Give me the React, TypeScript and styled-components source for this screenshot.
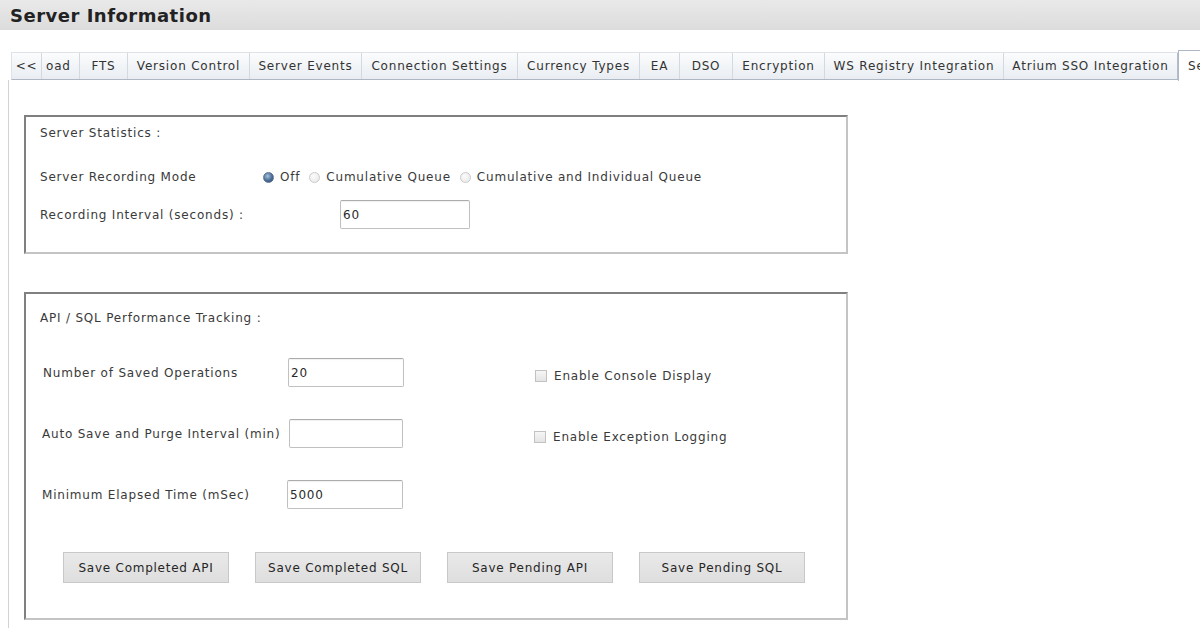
import styled, { createGlobalStyle } from "styled-components";

const GlobalStyle = createGlobalStyle`
  html, body {
    margin: 0;
    padding: 0;
    background: #fff;
    overflow: hidden;
  }
  body {
    font-family: "DejaVu Sans", Verdana, sans-serif;
    color: #3a3a3a;
  }
`;

const Page = styled.div`
  width: 1200px;
  height: 628px;
  overflow: hidden;
`;

const Header = styled.div`
  height: 30px;
  display: flex;
  align-items: center;
  padding-left: 10px;
  background: linear-gradient(#e9e9e9, #dcdcdc);

  h1 {
    margin: 0;
    font: bold 18px "DejaVu Sans", sans-serif;
    letter-spacing: 0.5px;
    color: #222;
  }
`;

const TabArea = styled.div`
  margin: 20px 0 0 8px;
  width: 1400px;
`;

const TabRow = styled.div`
  display: flex;
  align-items: flex-end;
  height: 30px;
  padding-left: 3px;
`;

const TabStrip = styled.div`
  display: flex;
  height: 28px;
  box-sizing: border-box;
  border: 1px solid #dfe3e8;
  border-bottom-color: #aeb8c5;
  border-right: none;
  background: linear-gradient(#fbfcfd, #e9edf2);
`;

const Tab = styled.div<{ $w: number; $left?: boolean }>`
  width: ${(p) => p.$w}px;
  box-sizing: border-box;
  display: flex;
  align-items: center;
  justify-content: ${(p) => (p.$left ? "flex-start" : "center")};
  padding-left: ${(p) => (p.$left ? "4px" : "0")};
  border-right: 1px solid #d3d9e1;
  font-size: 12px;
  letter-spacing: 0.8px;
  color: #333;
  white-space: nowrap;
  overflow: hidden;

  &:last-child {
    border-right-color: #b4bdc9;
  }
`;

const ActiveTab = styled.div`
  height: 31px;
  box-sizing: border-box;
  margin-bottom: -1px;
  padding: 0 9px;
  display: flex;
  align-items: center;
  background: #fff;
  border: 1px solid #aeb8c5;
  border-bottom: none;
  font-size: 12px;
  letter-spacing: 0.8px;
  color: #333;
  white-space: nowrap;
`;

const TabPanel = styled.div`
  border-left: 1px solid #d2d2d2;
  padding: 35px 0 20px 15px;
  height: 600px;
`;

const GroupBox = styled.div<{ $pt: number; $pb: number; $mt?: number }>`
  width: 824px;
  box-sizing: border-box;
  margin-top: ${(p) => p.$mt ?? 0}px;
  padding: ${(p) => p.$pt}px 14px ${(p) => p.$pb}px;
  border: 2px solid;
  border-color: #808080 #c4c4c4 #c4c4c4 #808080;
  font-size: 12px;
  letter-spacing: 0.8px;
`;

const GroupTitle = styled.div`
  line-height: 16px;
  white-space: nowrap;
`;

const Row = styled.div<{ $mt: number; $h: number; $indent?: number }>`
  display: flex;
  align-items: center;
  margin-top: ${(p) => p.$mt}px;
  height: ${(p) => p.$h}px;
  padding-left: ${(p) => p.$indent ?? 0}px;
  white-space: nowrap;
`;

const Label = styled.div<{ $w: number }>`
  width: ${(p) => p.$w}px;
  flex: none;
  white-space: nowrap;
`;

const RadioOption = styled.label`
  display: flex;
  align-items: center;
  gap: 6px;
  margin-right: 9px;
`;

const RadioDot = styled.span<{ $on?: boolean }>`
  width: 11px;
  height: 11px;
  border-radius: 50%;
  box-sizing: border-box;
  border: 1px solid ${(p) => (p.$on ? "#5f7590" : "#cbcbcb")};
  background: ${(p) =>
    p.$on
      ? "radial-gradient(circle at 40% 35%, #a8c2de 0%, #4a6d96 55%, #2b4466 100%)"
      : "radial-gradient(circle at 40% 35%, #fbfbfb 0%, #e6e6e6 100%)"};
`;

const TextInput = styled.input<{ $w: number }>`
  width: ${(p) => p.$w}px;
  height: 29px;
  box-sizing: border-box;
  margin: 0;
  padding: 0 2px;
  border: 1px solid #c0c0c0;
  border-top-color: #acacac;
  border-radius: 2px;
  box-shadow: inset 0 1px 1px rgba(0, 0, 0, 0.06);
  font: 12px "DejaVu Sans", Verdana, sans-serif;
  letter-spacing: 0.8px;
  color: #2a2a2a;
  background: #fff;
  outline: none;
`;

const CheckOption = styled.label`
  display: flex;
  align-items: center;
  gap: 7px;
  margin-left: 131px;
  padding-top: 6px;
`;

const CheckBox = styled.span`
  width: 12px;
  height: 12px;
  box-sizing: border-box;
  border: 1px solid #c2c2c2;
  background: linear-gradient(#f6f6f6, #e4e4e4);
`;

const ButtonRow = styled.div`
  display: flex;
  gap: 26px;
  margin-top: 43px;
  padding-left: 23px;
`;

const Button = styled.button`
  width: 166px;
  height: 31px;
  margin: 0;
  padding: 0;
  border: 1px solid #c8c8c8;
  background: linear-gradient(#e9e9e9, #dedede);
  font: 12px "DejaVu Sans", Verdana, sans-serif;
  letter-spacing: 0.75px;
  color: #262626;
`;

const tabs: [string, number][] = [
  ["<<", 30],
  ["oad", 38],
  ["FTS", 48],
  ["Version Control", 122],
  ["Server Events", 112],
  ["Connection Settings", 156],
  ["Currency Types", 122],
  ["EA", 40],
  ["DSO", 53],
  ["Encryption", 92],
  ["WS Registry Integration", 179],
  ["Atrium SSO Integration", 174],
];

export default function App() {
  return (
    <Page>
      <GlobalStyle />
      <Header>
        <h1>Server Information</h1>
      </Header>
      <TabArea>
        <TabRow>
          <TabStrip>
            {tabs.map(([name, w]) => (
              <Tab key={name} $w={w} $left={name === "oad"}>
                {name}
              </Tab>
            ))}
          </TabStrip>
          <ActiveTab>Server Statistics</ActiveTab>
        </TabRow>
        <TabPanel>
          <GroupBox $pt={8} $pb={23}>
            <GroupTitle>Server Statistics :</GroupTitle>
            <Row $mt={26} $h={20}>
              <Label $w={223}>Server Recording Mode</Label>
              <RadioOption>
                <RadioDot $on />
                Off
              </RadioOption>
              <RadioOption>
                <RadioDot />
                Cumulative Queue
              </RadioOption>
              <RadioOption>
                <RadioDot />
                Cumulative and Individual Queue
              </RadioOption>
            </Row>
            <Row $mt={13} $h={29}>
              <Label $w={300}>Recording Interval (seconds) :</Label>
              <TextInput $w={130} defaultValue="60" />
            </Row>
          </GroupBox>

          <GroupBox $pt={16} $pb={35} $mt={38}>
            <GroupTitle>API / SQL Performance Tracking :</GroupTitle>
            <Row $mt={32} $h={29} $indent={3}>
              <Label $w={245}>Number of Saved Operations</Label>
              <TextInput $w={116} defaultValue="20" />
              <CheckOption>
                <CheckBox />
                Enable Console Display
              </CheckOption>
            </Row>
            <Row $mt={32} $h={29} $indent={2}>
              <Label $w={247}>Auto Save and Purge Interval (min)</Label>
              <TextInput $w={114} defaultValue="" />
              <CheckOption>
                <CheckBox />
                Enable Exception Logging
              </CheckOption>
            </Row>
            <Row $mt={32} $h={29} $indent={2}>
              <Label $w={245}>Minimum Elapsed Time (mSec)</Label>
              <TextInput $w={116} defaultValue="5000" />
            </Row>
            <ButtonRow>
              <Button>Save Completed API</Button>
              <Button>Save Completed SQL</Button>
              <Button>Save Pending API</Button>
              <Button>Save Pending SQL</Button>
            </ButtonRow>
          </GroupBox>
        </TabPanel>
      </TabArea>
    </Page>
  );
}
